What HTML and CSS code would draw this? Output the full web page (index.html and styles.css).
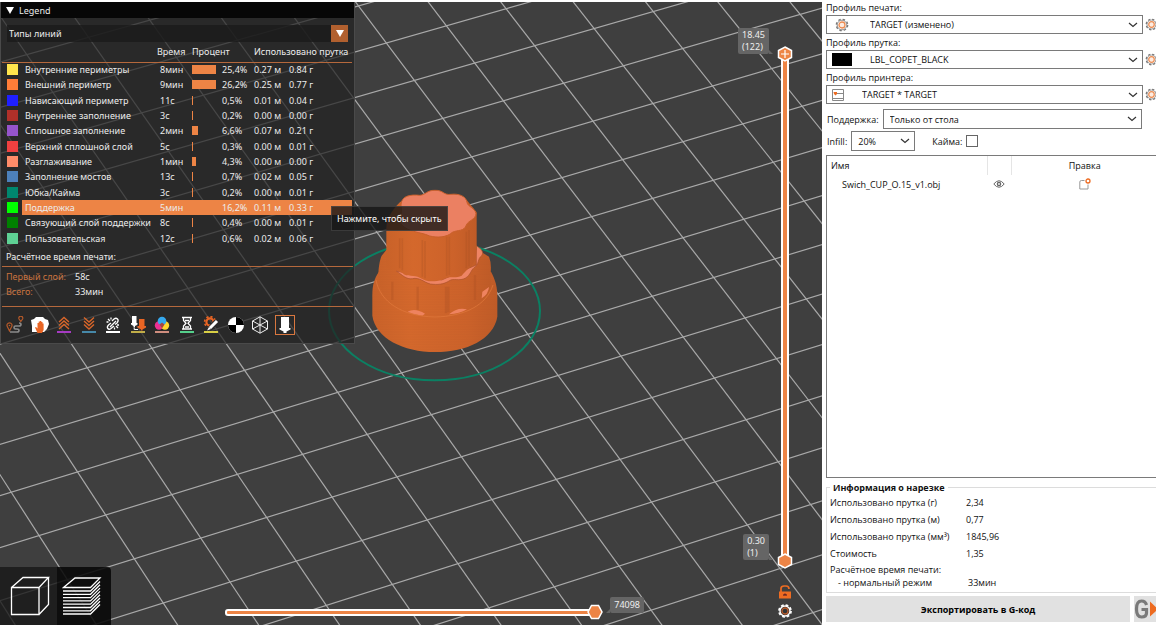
FILE: index.html
```html
<!DOCTYPE html>
<html lang="ru">
<head>
  <meta charset="UTF-8">
  <meta name="viewport" content="width=device-width, initial-scale=1.0">
  <title>Slicer</title>
  <link rel="stylesheet" href="styles.css">
</head>
<body>
  <svg width="0" height="0" class="defs">
    <symbol id="cog" viewBox="0 0 14 14">
      <circle cx="7" cy="7" r="5.6" fill="none" stroke="#777" stroke-width="1.5" stroke-dasharray="2.4 2"/>
      <circle cx="7" cy="7" r="4.8" fill="#fff" stroke="#888" stroke-width=".9"/>
      <circle cx="7" cy="7" r="3" fill="#fdebe0" stroke="#ed8b50" stroke-width="1.3"/>
    </symbol>
  </svg>

  <div class="app">
    <main class="viewport">
      <svg class="scene" viewBox="0 2 822 623" preserveAspectRatio="xMinYMin slice">
        <defs>
          <linearGradient id="side" x1="0" x2="1" y1="0" y2="0">
            <stop offset="0" stop-color="#c96229"/>
            <stop offset=".3" stop-color="#d4682c"/>
            <stop offset=".75" stop-color="#cc622a"/>
            <stop offset="1" stop-color="#bf5b27"/>
          </linearGradient>
          <pattern id="layers" width="8" height="5" patternUnits="userSpaceOnUse">
            <path d="M0 4.500H8" stroke="#a94e20" opacity=".3"/>
          </pattern>
        </defs>
        <g id="grid" class="grid"></g>
        <ellipse cx="434.500" cy="311" rx="105.500" ry="69.300" fill="none" stroke="#0b8063" stroke-width="2"/>
        <g transform="translate(365 185) scale(.33333)">
          <!-- bottom tier -->
          <path fill="url(#side)" d="M22 330C22 300 28 280 42 260H378C391 285 397 305 397 335V395C385 463 305 501 210 501C115 501 32 460 22 392Z"/>
          <path fill="url(#layers)" d="M22 330C22 300 28 280 42 260H378C391 285 397 305 397 335V395C385 463 305 501 210 501C115 501 32 460 22 392Z"/>
          <!-- middle tier -->
          <path fill="url(#side)" d="M40 275C40 250 44 225 50 212L64 195H335L345 190L355 205L372 215Q380 235 377 262L379 300C368 348 330 378 285 386C235 396 165 396 120 378C75 362 42 325 40 275Z"/>
          <path fill="url(#layers)" d="M40 275C40 250 44 225 50 212L64 195H335L345 190L355 205L372 215Q380 235 377 262L379 300C368 348 330 378 285 386C235 396 165 396 120 378C75 362 42 325 40 275Z"/>
          <path fill="none" stroke="#ad5123" stroke-width="7" opacity=".35" d="M82 290V345M158 305V374M243 305V385M250 305V382M330 270V345"/>
          <path fill="#ee835f" d="M128 380Q150 368 180 386L172 392Q148 390 128 380ZM252 388Q276 366 306 373Q284 386 252 388ZM350 340L352 320L372 306Q370 328 350 340Z"/>
          <path fill="none" stroke="#de763a" stroke-width="3" opacity=".8" d="M33 285C45 350 110 394 210 396C300 394 365 360 384 300"/>
          <!-- ledge between the tiers -->
          <path fill="#ee8464" stroke="#a9502a" stroke-width="2" d="M94 258C112 270 124 284 142 281C164 276 176 292 196 297C218 300 236 298 252 288C264 278 284 290 302 279C318 268 316 258 327 248C344 238 336 222 350 212C356 202 350 196 345 190L334 182V240L230 285Z"/>
          <!-- top tier -->
          <path fill="url(#side)" d="M106 50C90 66 64 95 64 130V246C78 256 98 254 112 264C126 278 148 268 164 278C184 290 204 292 232 284C252 270 272 282 290 272C304 256 312 250 322 240C332 226 335 205 335 190V82L305 45Z"/>
          <path fill="none" stroke="#a94e20" stroke-width="5" opacity=".3" d="M104 160V250M112 160V256M172 165V275M180 168V280M245 155V272M253 155V270M304 140V250M312 135V244"/>
          <path fill="#eb8062" stroke="#c85f2c" stroke-width="3" d="M108 60C108 32 138 28 164 31C182 30 186 15 210 16C236 15 234 31 258 28C282 25 304 34 306 52C308 66 330 68 333 86C332 104 310 106 304 120C298 140 278 134 262 142C246 157 218 159 194 153C176 145 166 145 146 139C121 133 96 115 106 95Q112 80 108 60Z"/>
        </g>
      </svg>

      <section class="legend">
        <h1 class="legend-title"><span class="tri"></span>Legend</h1>
        <div class="combo">
          <select aria-label="Тип просмотра"><option>Типы линий</option></select>
          <span class="combo-arrow"><span class="tri"></span></span>
        </div>
        <table class="lines">
          <colgroup>
            <col class="w-swatch"><col class="w-name"><col class="w-time"><col class="w-bar"><col class="w-percent"><col class="w-metres"><col>
          </colgroup>
          <thead>
            <tr><th></th><th></th><th>Время</th><th colspan="2">Процент</th><th colspan="2">Использовано прутка</th></tr>
          </thead>
          <tbody id="lines"></tbody>
        </table>
        <p class="legend-sub">Расчётное время печати:</p>
        <dl class="times">
          <dt>Первый слой:</dt><dd>58с</dd>
          <dt>Всего:</dt><dd>33мин</dd>
        </dl>
        <div class="tools">
          <button aria-label="Перемещения"><svg viewBox="0 0 18 18" fill="none"><path d="M4 16H11Q13 16 13 14.500T11 13H9.500Q8 13 8 11.500T9.500 10H13Q15 10 15 8.500T13 7" stroke="#8a8a8a" stroke-width="1.600"/><path d="M3.500 15L1.300 10.500A2.500 2.500 0 1 1 5.700 10.500ZM14.800 5.500L13 3A2 2 0 1 1 16.600 3Z" stroke="#b65a2a" stroke-width="1.200"/><circle cx="3.500" cy="9.500" r=".8" fill="#b65a2a"/></svg></button>
          <button aria-label="Протирка"><svg viewBox="0 0 18 18"><path d="M0 4L3 3L5 1H12L14 3L17 4L18 8L16 13L13 16H1V10Z" fill="#fff"/><path d="M6.500 17L4 11.500L5 11L6.500 12.500V7H7.700V5.500H9V5H10.300V6H11.500V7.500H12.600V14L11 17Z" fill="#e96524"/></svg></button>
          <button aria-label="Ретракты"><svg viewBox="0 0 18 18" fill="none"><path d="M4 6L9 1.500L14 6M4 9.500L9 5L14 9.500M4 13L9 8.500L14 13" stroke="#d9662a" stroke-width="1.400"/><path d="M2 16H16" stroke="#a53bc2" stroke-width="2"/></svg></button>
          <button aria-label="Деретракты"><svg viewBox="0 0 18 18" fill="none"><path d="M4 1.500L9 6L14 1.500M4 5L9 9.500L14 5M4 8.500L9 13L14 8.500" stroke="#d9662a" stroke-width="1.400"/><path d="M2 16H16" stroke="#4688a8" stroke-width="2"/></svg></button>
          <button aria-label="Швы"><svg viewBox="0 0 18 18" fill="none" stroke="#fff" stroke-width="1.300"><path d="M8 5L10 3Q12 1.500 13.500 3T13 7L11 8.500M10 10L7 12.500Q5 14 3.800 12.500T4.500 9L7 7M6 11L12 5M4 3L6 5M7 1.500V3.500M2.500 6H4.500M12 10L14 12M10.500 11.500V13.500M13 9H15"/><path d="M2 16H16" stroke-width="2"/></svg></button>
          <button aria-label="Смена инструмента"><svg viewBox="0 0 18 18"><path d="M3 0H7.500V7H8.500V8.500L6 10V11.500H4.500V10L2 8.500V7H3Z" fill="#fff"/><path d="M10 3H15.500V10H17V11.500L13.500 13.500V14.500H12V13.500L8.500 11.500V10H10Z" fill="#e96524"/><path d="M5.200 12V13.500H9" fill="none" stroke="#fff"/><path d="M2 15H16V17H2Z" fill="#c0ad48"/></svg></button>
          <button aria-label="Смена цвета"><svg viewBox="0 0 18 18"><circle cx="6" cy="9.500" r="4.200" fill="#ed2f91"/><circle cx="12" cy="9.500" r="4.200" fill="#ffd62e"/><circle cx="9" cy="5" r="4.300" fill="#35a8ee"/><path d="M9 6.500L11.500 8.500L9 12.500L6.500 8.500Z" fill="#a64542"/><path d="M2 15H16V17H2Z" fill="#cf8d7e"/></svg></button>
          <button aria-label="Паузы"><svg viewBox="0 0 18 18" fill="none" stroke="#fff" stroke-width="1.300"><path d="M4 1.500H14M4 13H14M5.500 2V4.500L8 7.200L5.500 10V12.500M12.500 2V4.500L10 7.200L12.500 10V12.500M7 4.500H11M7 11H11"/><path d="M2 16H16" stroke="#55cf8b" stroke-width="2"/></svg></button>
          <button aria-label="Пользовательский код"><svg viewBox="0 0 18 18" fill="none"><circle cx="8" cy="6" r="3.600" stroke="#e96524" stroke-width="2.200"/><circle cx="8" cy="6" r="5.400" stroke="#e96524" stroke-width="1.600" stroke-dasharray="2.200 2"/><path d="M7 13.500L15 5" stroke="#2b2b2b" stroke-width="5"/><path d="M8 12L15 5" stroke="#fff" stroke-width="3"/><path d="M5 14.500L7 11L9 13Z" fill="#fff"/><path d="M2 16H16" stroke="#d8cf45" stroke-width="2"/></svg></button>
          <button aria-label="Центр масс"><svg viewBox="0 0 18 18"><circle cx="9" cy="9" r="8" fill="#fff"/><path d="M9 9V1A8 8 0 0 1 17 9ZM9 9V17A8 8 0 0 1 1 9Z" fill="#000"/></svg></button>
          <button aria-label="Оболочки"><svg viewBox="0 0 18 18" fill="none" stroke="#eee"><path d="M9 .8L16.500 5V13L9 17.200L1.500 13V5ZM9 .8V17.200M1.500 5L16.500 13M16.500 5L1.500 13"/></svg></button>
          <button class="on" aria-label="Маркер инструмента"><svg viewBox="0 0 18 18"><path d="M5 1H13V12H14.500V13.500L10.500 15.500V17H7.500V15.500L3.500 13.500V12H5Z" fill="#fff"/></svg></button>
        </div>
      </section>

      <div class="tooltip">Нажмите, чтобы скрыть</div>

      <div class="views">
        <button aria-label="Редактор"><svg viewBox="0 0 40 40" fill="none" stroke="#fff" stroke-width="1.300"><path d="M1.500 11.500H29V38.500H1.500ZM1.500 11.500L13 1.500H38.500L29 11.500M38.500 1.500V28.500L29 38.500"/></svg></button>
        <button class="on" aria-label="Просмотр"><svg viewBox="0 0 40 40" fill="none" stroke="#fff" stroke-width="1.300"><path d="M1.500 11.500L13 2H38L28.500 11.500Z"/><path d="M1 15H28.500L38 5.500M1 18.300H28.500L38 8.800M1 21.600H28.500L38 12.100M1 24.900H28.500L38 15.400M1 28.200H28.500L38 18.700M1 31.500H28.500L38 22M1 34.800H28.500L38 25.300M1 38H28.500L38 28.500"/></svg></button>
      </div>

      <div class="moves">
        <input type="range" class="slider" min="0" max="74098" value="74098" aria-label="Перемещения">
        <output class="tag tag-left">74098</output>
      </div>

      <div class="heights">
        <input type="range" class="slider upright" min="1" max="122" value="122" aria-label="Верхний слой">
        <input type="range" class="slider upright lower" min="1" max="122" value="1" aria-label="Нижний слой">
        <output class="tag tag-top">18.45<br>(122)</output>
        <output class="tag tag-bottom">0.30<br>(1)</output>
      </div>
      <div class="slider-tools">
        <button aria-label="Замок"><svg viewBox="0 0 14 14"><path d="M3 7V3.500Q3 1 6 1H8Q11 1 11 4" fill="none" stroke="#ee6c22" stroke-width="1.700"/><path d="M1 6.500H13V13.500H1Z" fill="#ee6c22"/><path d="M6.500 8.500H7.500V9.500H9V10.500H5V9.500H6.500Z" fill="#412"/></svg></button>
        <button aria-label="Настройки"><svg viewBox="0 0 14 14"><circle cx="7" cy="7" r="6" fill="none" stroke="#fff" stroke-width="1.800" stroke-dasharray="2.700 2"/><circle cx="7" cy="7" r="5" fill="#333" stroke="#fff" stroke-width="1.400"/><circle cx="7" cy="7" r="3" fill="none" stroke="#b85b2c" stroke-width="1.300"/></svg></button>
      </div>
    </main>

    <aside class="panel">
      <label class="caption" for="print">Профиль печати:</label>
      <div class="preset">
        <span class="preset-icon"><svg width="14" height="14"><use href="#cog"/></svg></span>
        <select id="print" class="wide"><option>TARGET (изменено)</option></select>
        <button class="cog" aria-label="Настройки печати"><svg width="13" height="13"><use href="#cog"/></svg></button>
      </div>
      <label class="caption" for="filament">Профиль прутка:</label>
      <div class="preset">
        <span class="preset-icon black"></span>
        <select id="filament" class="wide"><option>LBL_COPET_BLACK</option></select>
        <button class="cog" aria-label="Настройки прутка"><svg width="13" height="13"><use href="#cog"/></svg></button>
      </div>
      <label class="caption" for="printer">Профиль принтера:</label>
      <div class="preset">
        <span class="preset-icon printer"><svg width="12" height="12" viewBox="0 0 12 12" fill="none"><path d="M.5 .5H11.500V11.500H.5ZM.5 9.500H11.500M2 4.500H11" stroke="#888"/><path d="M1.500 3H5V5L3.500 6.500L2 5Z" fill="#ed6b21"/></svg></span>
        <select id="printer" class="wide near"><option>TARGET * TARGET</option></select>
        <button class="cog" aria-label="Настройки принтера"><svg width="13" height="13"><use href="#cog"/></svg></button>
      </div>
      <div class="field">
        <label for="support">Поддержка:</label>
        <select id="support"><option>Только от стола</option></select>
      </div>
      <div class="field">
        <label for="infill">Infill:</label>
        <select id="infill" class="short"><option>20%</option></select>
        <label class="brim" for="brim">Кайма:</label>
        <input type="checkbox" id="brim">
      </div>

      <div class="objects">
        <table>
          <thead><tr><th class="o-name">Имя</th><th class="o-eye"></th><th>Правка</th></tr></thead>
          <tbody>
            <tr>
              <td class="o-name">Swich_CUP_O.15_v1.obj</td>
              <td class="o-eye"><svg width="12" height="8" viewBox="0 0 12 8" fill="none" stroke="#666"><path d="M.8 4Q6 -2.500 11.200 4Q6 10.500 .8 4Z"/><circle cx="6" cy="4" r="1.600" stroke-width="1.400"/></svg></td>
              <td><svg width="12" height="12" viewBox="0 0 12 12" fill="none"><path d="M5.500 2.500H2.500Q.8 2.500 .8 4V11H9V6.500" stroke="#999"/><circle cx="9" cy="3" r="2" stroke="#ed6b21" stroke-width="1.300"/></svg></td>
            </tr>
          </tbody>
        </table>
      </div>

      <fieldset class="info">
        <legend>Информация о нарезке</legend>
        <dl>
          <dt>Использовано прутка (г)</dt><dd>2,34</dd>
          <dt>Использовано прутка (м)</dt><dd>0,77</dd>
          <dt>Использовано прутка (мм³)</dt><dd>1845,96</dd>
          <dt>Стоимость</dt><dd>1,35</dd>
        </dl>
        <dl class="tight">
          <dt>Расчётное время печати:</dt><dd></dd>
          <dt class="mode">- нормальный режим</dt><dd>33мин</dd>
        </dl>
      </fieldset>

      <div class="actions">
        <button class="export">Экспортировать в G-код</button>
        <button class="send" aria-label="Отправить G-код"><svg width="26" height="20" viewBox="0 0 26 20"><path d="M12.500 6Q11.500 2 7.500 2Q2.500 2 2.500 10T7.500 18Q12.500 18 12.500 14V10.500H7.500" fill="none" stroke="#7a7a7a" stroke-width="3.200"/><path d="M16 2.500L24 10L16 17.500Z" fill="#ed6b21"/></svg></button>
      </div>
    </aside>
  </div>
  <script src="script.js"></script>
</body>
</html>
```
FILE: styles.css
```css
*,
*::before,
*::after {
  box-sizing: border-box;
}

body {
  margin: 0;
  background: #fff;
  font-family: "Open Sans", "Noto Sans", sans-serif;
  font-size: 9px;
  color: #111;
}

button {
  border: none;
  padding: 0;
  background: none;
  font: inherit;
  cursor: pointer;
}

select {
  appearance: none;
  border: 1px solid #7a7a7a;
  border-radius: 0;
  background: #fff url("data:image/svg+xml,%3Csvg xmlns='http://www.w3.org/2000/svg' width='10' height='6'%3E%3Cpath d='M1 1L5 4.500L9 1' fill='none' stroke='%23333' stroke-width='1.200'/%3E%3C/svg%3E") no-repeat right 4px center;
  font: inherit;
  color: inherit;
  height: 20px;
  padding: 0 16px 0 6px;
}

svg {
  display: block;
}

.defs {
  position: absolute;
}

.app {
  display: grid;
  grid-template-columns: 1fr 334px;
  height: 100vh;
}

/* 3D view */

.viewport {
  position: relative;
  overflow: hidden;
  margin-top: 2px;
  background: #3f3f3f;
  font-family: "Noto Sans", sans-serif;
}

.scene {
  width: 100%;
  height: 100%;
}

.grid {
  stroke: #a9a9a9;
  stroke-width: 1.2;
}

.legend {
  position: absolute;
  left: 0;
  top: 0;
  width: 355px;
  border: 1px solid #4a4a4a;
  border-top: none;
  background: rgba(33, 33, 33, 0.72);
  color: #ececec;
}

.legend-title {
  display: flex;
  align-items: center;
  gap: 5px;
  height: 16px;
  margin: 0;
  padding-left: 5px;
  background: #070707;
  font-size: 9px;
  font-weight: 400;
}

.tri {
  border: 4px solid transparent;
  border-top: 7px solid #fff;
  border-bottom: none;
}

.combo {
  display: flex;
  height: 17px;
  margin: 7px 6px 0;
}

.combo select {
  flex: 1;
  height: 17px;
  border: none;
  padding: 0 2px;
  background: rgba(26, 26, 26, 0.8);
}

.combo-arrow {
  display: flex;
  align-items: center;
  justify-content: center;
  width: 17px;
  background: #b1602f;
}

.lines {
  width: 350px;
  margin-left: 1px;
  border-collapse: collapse;
  table-layout: fixed;
}

.w-swatch {
  width: 20px;
}

.w-name {
  width: 135px;
}

.w-time {
  width: 35px;
}

.w-bar {
  width: 30px;
}

.w-percent {
  width: 32px;
}

.w-metres {
  width: 35px;
}

.lines th {
  height: 20px;
  padding: 0;
  border-bottom: 1px solid #b5683c;
  font-weight: 400;
  text-align: left;
  white-space: nowrap;
}

.lines td {
  height: 15px;
  padding: 0;
  line-height: 13px;
  white-space: nowrap;
}

.lines tbody {
  height: 184px;
}

.lines .c-swatch {
  padding-left: 5px;
}

.lines .c-name,
.lines .c-time {
  padding-left: 3px;
}

.swatch {
  display: block;
  width: 11px;
  height: 11px;
}

.bar {
  display: block;
  height: 9px;
  background: #ed8445;
}

.lines .active td:not(.c-swatch) {
  background: #ed8445;
}

.legend-sub {
  margin: 0 1px;
  padding: 4px 4px 2px;
  border-bottom: 1px solid #b5683c;
  line-height: 14px;
}

.times {
  display: grid;
  grid-template-columns: 69px 1fr;
  margin: 0 1px;
  padding: 2px 4px 7px;
  border-bottom: 1px solid #b5683c;
  line-height: 15px;
}

.times dt {
  color: #c9733f;
}

.times dd {
  margin: 0;
}

.tools {
  display: grid;
  grid-template-columns: repeat(12, 1fr);
  justify-items: center;
  width: 294px;
  margin: 9px 0 9px 2px;
}

.tools svg {
  width: 18px;
  height: 18px;
}

.tools .on {
  outline: 1px solid #d9773f;
}

.tooltip {
  position: absolute;
  left: 331px;
  top: 204px;
  padding: 5px;
  border: 1px solid rgba(90, 90, 90, 0.5);
  background: rgba(22, 22, 22, 0.8);
  color: #fff;
  line-height: 13px;
}

.views {
  position: absolute;
  left: 0;
  bottom: 0;
  display: flex;
  border-radius: 0 4px 0 0;
  overflow: hidden;
}

.views button {
  padding: 9px 7px 9px 10px;
  background: rgba(24, 24, 24, 0.8);
}

.views .on {
  padding: 9px 9px 9px 5px;
  background: rgba(8, 8, 8, 0.88);
}

.views svg {
  width: 40px;
  height: 40px;
}

.slider {
  appearance: none;
  margin: 0;
  background: none;
}

.slider::-webkit-slider-thumb {
  appearance: none;
  width: 16px;
  height: 16px;
  background: url("data:image/svg+xml,%3Csvg xmlns='http://www.w3.org/2000/svg' width='16' height='16'%3E%3Cpath d='M4.500 1.500H11.500L15 8L11.500 14.500H4.500L1 8Z' fill='%23ed8445' stroke='%23fff' stroke-width='1.500'/%3E%3C/svg%3E");
}

/* rails end under the thumbs */
.moves::before,
.heights::before {
  content: "";
  position: absolute;
  border: 2px solid #fff;
  border-radius: 3px;
  background: #ed8445;
}

.moves {
  position: absolute;
  left: 225px;
  right: 178px;
  bottom: 5px;
  display: flex;
  gap: 7px;
}

.moves::before {
  left: 0;
  right: 44px;
  top: 5px;
  height: 7px;
}

.moves .slider {
  position: relative;
  flex: 1;
  height: 16px;
}

.heights {
  position: absolute;
  right: 29px;
  top: 44px;
  bottom: 56px;
  width: 16px;
}

.heights::before {
  top: 8px;
  bottom: 8px;
  left: 4px;
  width: 8px;
}

.slider.upright {
  position: absolute;
  inset: 0;
  width: 16px;
  height: 100%;
  writing-mode: vertical-lr;
  direction: rtl;
}

.upright::-webkit-slider-thumb {
  background: url("data:image/svg+xml,%3Csvg xmlns='http://www.w3.org/2000/svg' width='16' height='16'%3E%3Cpath d='M8 1L14.500 4.500V11.500L8 15L1.500 11.500V4.500Z' fill='%23ed8445' stroke='%23fff' stroke-width='1.500'/%3E%3Cpath d='M8 4V12M4 8H12' stroke='%23fff' stroke-width='1.200'/%3E%3C/svg%3E");
}

.slider.lower {
  pointer-events: none;
}

.lower::-webkit-slider-thumb {
  pointer-events: auto;
  background: url("data:image/svg+xml,%3Csvg xmlns='http://www.w3.org/2000/svg' width='16' height='16'%3E%3Cpath d='M8 1L14.500 4.500V11.500L8 15L1.500 11.500V4.500Z' fill='%23ed8445' stroke='%23fff' stroke-width='1.500'/%3E%3C/svg%3E");
}

.tag {
  position: relative;
  padding: 1px 4px;
  border-radius: 2px;
  background: #656565;
  color: #eee;
  line-height: 12px;
}

.tag::after {
  content: "";
  position: absolute;
  border: 4px solid transparent;
}

.tag-left {
  align-self: flex-start;
  margin-top: -7px;
  padding: 2px 4px;
}

.tag-left::after {
  right: 100%;
  bottom: 0;
  border-right-color: #656565;
  border-bottom: none;
}

.tag-top,
.tag-bottom {
  position: absolute;
  right: 24px;
}

.tag-top {
  top: -18px;
}

.tag-bottom {
  bottom: 9px;
}

.tag-top::after,
.tag-bottom::after {
  left: 100%;
  bottom: 0;
  border-left-color: #656565;
  border-bottom: none;
}

.slider-tools {
  position: absolute;
  right: 30px;
  bottom: 7px;
  display: grid;
  gap: 5px;
}

.slider-tools svg {
  width: 14px;
  height: 14px;
}

/* side panel */

.panel {
  display: flex;
  flex-direction: column;
  height: 100vh;
  padding-left: 4px;
  overflow: hidden;
}

.caption {
  height: 15px;
  line-height: 15px;
}

.preset {
  position: relative;
  display: flex;
  align-items: center;
  gap: 2px;
  margin: 0 -2px 1px 0;
}

.preset select {
  height: 19px;
}

.preset-icon {
  position: absolute;
  left: 6px;
  width: 20px;
  display: flex;
  justify-content: center;
}

.preset-icon.black {
  height: 13px;
  background: #000;
}

.preset-icon.printer {
  justify-content: flex-start;
}

.wide {
  flex: 1;
  padding-left: 43px;
}

.wide.near {
  padding-left: 35px;
}

.field {
  display: flex;
  align-items: center;
  gap: 4px;
  margin: 4px 14px 0 1px;
}

.field + .field {
  margin-top: 2px;
}

#support {
  flex: 1;
}

.short {
  width: 64px;
}

.brim {
  margin-left: 13px;
}

#brim {
  appearance: none;
  width: 12px;
  height: 12px;
  margin: 0;
  border: 1px solid #666;
}

.objects {
  flex: 1;
  margin-top: 4px;
  border: 1px solid #7a7a7a;
  border-right: none;
}

.objects table {
  width: 100%;
  border-collapse: collapse;
  table-layout: fixed;
}

.objects th {
  height: 19px;
  padding: 0;
  font-weight: 400;
}

.objects td {
  height: 18px;
  padding: 0;
}

.objects svg {
  margin: 0 auto;
}

.objects th:last-child,
.objects td:last-child {
  padding: 0 0 0 2px;
}

.objects .o-name {
  width: 160px;
  padding-left: 4px;
  text-align: left;
}

.objects td.o-name {
  padding-left: 15px;
}

.objects .o-eye {
  width: 24px;
}

th.o-eye {
  border-left: 1px solid #e5e5e5;
  border-right: 1px solid #e5e5e5;
}

.info {
  min-width: 0;
  margin: 3px 0 0;
  padding: 0 3px 2px;
  border: 1px solid #dcdcdc;
  border-right: none;
}

.info legend {
  padding: 0 3px;
  font-weight: 700;
  line-height: 13px;
}

.info dl {
  display: grid;
  grid-template-columns: 136px 1fr;
  margin: 0 0 1px;
  line-height: 17px;
}

.info dl.tight {
  line-height: 13px;
}

.info dd {
  margin: 0;
}

.info .mode {
  padding-left: 8px;
}

.tight dd {
  padding-left: 2px;
}

.actions {
  display: flex;
  gap: 4px;
  margin: 3px -4px 3px 0;
}

.actions button {
  height: 26px;
  background: #e1e1e1;
}

.export {
  flex: 1;
  font-weight: 700;
}
```
FILE: script.js
```js
const svgNS = 'http://www.w3.org/2000/svg';

// print bed cell (i, j) -> screen
function project(i, j) {
  const w = 0.00363 * i - 0.00615 * j + 1;
  return [
    (63.2 * i + 26.23 * j + 500.7) / w,
    (-17.5 * i + 37.92 * j + 195.7) / w
  ];
}

const grid = document.getElementById('grid');

function addLine(a, b) {
  const line = document.createElementNS(svgNS, 'line');
  line.setAttribute('x1', a[0]);
  line.setAttribute('y1', a[1]);
  line.setAttribute('x2', b[0]);
  line.setAttribute('y2', b[1]);
  grid.appendChild(line);
}

for (let n = -20; n <= 20; n++) {
  addLine(project(n, -20), project(n, 22));
  addLine(project(-20, n), project(20, n));
}

// [color, name, time, percent, bar width, metres, grams]
const rows = [
  ['#ffe54d', 'Внутренние периметры', '8мин', '25,4%', 24, '0.27 м', '0.84 г'],
  ['#ff7d38', 'Внешний периметр', '9мин', '26,2%', 24, '0.25 м', '0.77 г'],
  ['#1f1fff', 'Нависающий периметр', '11с', '0,5%', 1, '0.01 м', '0.04 г'],
  ['#b03029', 'Внутреннее заполнение', '3с', '0,2%', 1, '0.00 м', '0.00 г'],
  ['#9654cc', 'Сплошное заполнение', '2мин', '6,6%', 6, '0.07 м', '0.21 г'],
  ['#f04040', 'Верхний сплошной слой', '5с', '0,3%', 1, '0.00 м', '0.01 г'],
  ['#ff8c69', 'Разглаживание', '1мин', '4,3%', 4, '0.00 м', '0.00 г'],
  ['#4d80ba', 'Заполнение мостов', '13с', '0,7%', 1, '0.02 м', '0.05 г'],
  ['#00876e', 'Юбка/Кайма', '3с', '0,2%', 1, '0.00 м', '0.01 г'],
  ['#00ff00', 'Поддержка', '5мин', '16,2%', 15, '0.11 м', '0.33 г'],
  ['#008000', 'Связующий слой поддержки', '8с', '0,4%', 1, '0.00 м', '0.01 г'],
  ['#5ed194', 'Пользовательская', '12с', '0,6%', 1, '0.02 м', '0.06 г']
];

document.getElementById('lines').innerHTML = rows.map(r => `
  <tr class="${r[1] === 'Поддержка' ? 'active' : ''}">
    <td class="c-swatch"><span class="swatch" style="background:${r[0]}"></span></td>
    <td class="c-name">${r[1]}</td>
    <td class="c-time">${r[2]}</td>
    <td><span class="bar" style="width:${r[4]}px"></span></td>
    <td>${r[3]}</td>
    <td>${r[5]}</td>
    <td>${r[6]}</td>
  </tr>`).join('');
```
